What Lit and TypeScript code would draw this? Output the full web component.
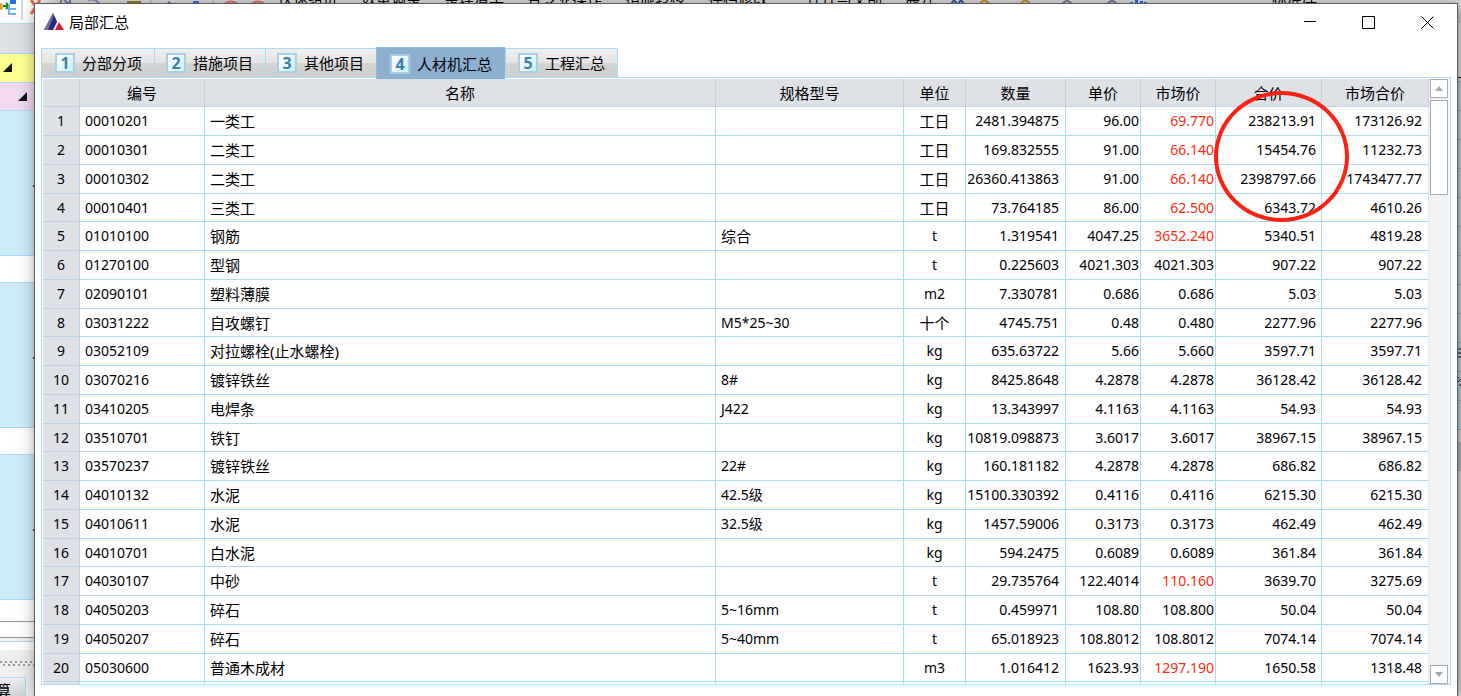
import { LitElement, html, css, svg } from "lit";
import { customElement, state } from "lit/decorators.js";
import { classMap } from "lit/directives/class-map.js";

type Row = [string, string, string, string, string, string, string, string, string];

const ROWS: Row[] = [
  ["00010201", "一类工", "", "工日", "2481.394875", "96.00", "69.770", "238213.91", "173126.92"],
  ["00010301", "二类工", "", "工日", "169.832555", "91.00", "66.140", "15454.76", "11232.73"],
  ["00010302", "二类工", "", "工日", "26360.413863", "91.00", "66.140", "2398797.66", "1743477.77"],
  ["00010401", "三类工", "", "工日", "73.764185", "86.00", "62.500", "6343.72", "4610.26"],
  ["01010100", "钢筋", "综合", "t", "1.319541", "4047.25", "3652.240", "5340.51", "4819.28"],
  ["01270100", "型钢", "", "t", "0.225603", "4021.303", "4021.303", "907.22", "907.22"],
  ["02090101", "塑料薄膜", "", "m2", "7.330781", "0.686", "0.686", "5.03", "5.03"],
  ["03031222", "自攻螺钉", "M5*25~30", "十个", "4745.751", "0.48", "0.480", "2277.96", "2277.96"],
  ["03052109", "对拉螺栓(止水螺栓)", "", "kg", "635.63722", "5.66", "5.660", "3597.71", "3597.71"],
  ["03070216", "镀锌铁丝", "8#", "kg", "8425.8648", "4.2878", "4.2878", "36128.42", "36128.42"],
  ["03410205", "电焊条", "J422", "kg", "13.343997", "4.1163", "4.1163", "54.93", "54.93"],
  ["03510701", "铁钉", "", "kg", "10819.098873", "3.6017", "3.6017", "38967.15", "38967.15"],
  ["03570237", "镀锌铁丝", "22#", "kg", "160.181182", "4.2878", "4.2878", "686.82", "686.82"],
  ["04010132", "水泥", "42.5级", "kg", "15100.330392", "0.4116", "0.4116", "6215.30", "6215.30"],
  ["04010611", "水泥", "32.5级", "kg", "1457.59006", "0.3173", "0.3173", "462.49", "462.49"],
  ["04010701", "白水泥", "", "kg", "594.2475", "0.6089", "0.6089", "361.84", "361.84"],
  ["04030107", "中砂", "", "t", "29.735764", "122.4014", "110.160", "3639.70", "3275.69"],
  ["04050203", "碎石", "5~16mm", "t", "0.459971", "108.80", "108.800", "50.04", "50.04"],
  ["04050207", "碎石", "5~40mm", "t", "65.018923", "108.8012", "108.8012", "7074.14", "7074.14"],
  ["05030600", "普通木成材", "", "m3", "1.016412", "1623.93", "1297.190", "1650.58", "1318.48"],
];

const HEADERS = ["", "编号", "名称", "规格型号", "单位", "数量", "单价", "市场价", "合价", "市场合价"];
const COLS = ["no", "code", "name", "spec", "unit", "qty", "price", "market", "sum", "msum"];
const TABS = ["分部分项", "措施项目", "其他项目", "人材机汇总", "工程汇总"];

/* The main program window that lies behind the summary dialog. */
@customElement("host-window")
export class HostWindow extends LitElement {
  static styles = css`
    :host {
      display: block;
      height: 100%;
      overflow: hidden;
      background: #f0f0f0;
      font: 15px/20px "Noto Sans", "Noto Sans CJK SC", sans-serif;
      color: #000;
    }
    .frame { display: flex; flex-direction: column; height: 100%; }
    .toolbar {
      flex: none;
      display: flex;
      height: 23px;
      box-sizing: border-box;
      background: linear-gradient(90deg, #fff, #fff 34px, #dcdcdc 60px);
      overflow: hidden;
    }
    .icons { flex: none; width: 278px; height: 23px; }
    .menu { display: flex; gap: 23px; margin-top: -12px; white-space: nowrap; }
    .wide { margin-left: 16px; }
    .far { margin-left: auto; margin-top: -12px; padding-right: 144px; }
    .tools { flex: none; width: 222px; height: 23px; }
    .body { flex: 1; min-height: 0; display: flex; justify-content: space-between; }
    .left { width: 60px; display: flex; flex-direction: column; }
    .left > div { flex: none; box-sizing: border-box; border-top: 1px solid #a9daf8; }
    .head { height: 30px; background: #dde0e5; }
    .yellow { height: 29px; background: #ffff90; padding: 9px 0 0 3px; }
    .pink { height: 28px; background: #f1d9f1; padding: 9px 0 0 18px; }
    .tri { display: block; width: 9px; height: 9px; }
    .blue { height: 145px; background: #cdecf8; display: flex; align-items: center; padding: 6px 0 0 33px; }
    .blue::after { content: ""; width: 4px; height: 2px; background: #222; }
    .gap { height: 27px; background: #fff; }
    .last { height: 22px; background: #fff; }
    .left > .field { height: 17px; background: #fff; border-top: 1px solid #8f8f8f; border-bottom: 1px solid #8f8f8f; }
    .line { height: 9px; background: #fff; margin-top: 3px; }
    .left > .split {
      height: 27px;
      border: 0;
      background: radial-gradient(circle at 1px 1px, #999 1px, transparent 1px) 0 11px / 5px 5px repeat-x,
        radial-gradient(circle at 1px 1px, #999 1px, transparent 1px) 3px 14px / 5px 5px repeat-x, #efefef;
    }
    .left > .bottom { flex: 1; background: linear-gradient(#eee, #ccc); width: 26px; border-right: 1px solid #a9daf8; }
    .calc { display: block; margin: 2px 0 0 -4px; }
    .right { width: 20px; display: flex; flex-direction: column; background: #efefef; }
    .props { height: 54px; flex: none; background: #f8f8f8; border-bottom: 1px solid #222; }
    .cells {
      height: 349px;
      flex: none;
      margin-top: 3px;
      background: repeating-linear-gradient(#9ccbe8 0 1px, #cdecf8 1px 29px);
    }
    .status { height: 29px; flex: none; margin-top: 12px; background: #c8cdd6; }
    .marks { display: block; width: 20px; height: 349px; }
  `;

  private corner() {
    return html`<svg class="tri" viewBox="0 0 9 9"><path d="M9 0V9H0Z" fill="#111" /></svg>`;
  }

  render() {
    return html`
      <div class="frame">
        <div class="toolbar">
          <svg class="icons" viewBox="0 0 278 23">
            <path d="M0 4h2v5H0z" fill="#ffe600" stroke="#c70" />
            <path d="M3 6h5M6 3l3 3-3 3" fill="none" stroke="#188a18" stroke-width="2" />
            <path d="M10 0h6v4h-6z" fill="#1f6fe0" />
            <path d="M9 4v10h7M10 9h6" fill="none" stroke="#6cb2f4" stroke-width="2" />
            <path d="M22 0V20" stroke="#b5b5b5" />
            <path d="M31 0l9 12M40 0l-9 14" stroke="#ee6848" stroke-width="3" />
            <path d="M61 0v4M64 0l5 4M70 0v4" stroke="#6b7f9f" stroke-width="2" />
            <path d="M88 0q8-2 12 5" fill="none" stroke="#8888bd" stroke-width="2" />
            <path d="M127 1h14v3h-14z" fill="#9c7a28" />
            <path d="M151 0V4M213 0V4" stroke="#aaa" />
            <path d="M166 4l3-3 3 3" fill="#317bd0" />
            <path d="M193 1h6v3h-6z" fill="#317bd0" />
            <path d="M224 4q7-5 14 0M251 4q7-5 14 0" fill="none" stroke="#db7766" stroke-width="2" />
          </svg>
          <div class="menu">
            <span>快速组价</span><span>数量调整</span><span>整理清单</span><span>各专业操作</span
            ><span>措施转移</span><span>存档修改</span><span class="wide">件性与交部</span><span>展开</span>
          </div>
          <svg class="tools" viewBox="0 0 222 23">
            <path d="M16 4l3-4 3 4M23 4l3-4 3 4" fill="none" stroke="#3854a0" stroke-width="2" />
            <path d="M45 4q4-7 9 0M86 4q4-7 9 0" fill="none" stroke="#c99229" stroke-width="2" />
            <path d="M127 4l5-4 5 4M172 4l5-4 5 4" fill="none" stroke="#71809c" stroke-width="2" />
            <path d="M195 2h3v2h-3zM200 0h3v4h-3zM205 1h3v3h-3zM209 2h3v2h-3z" fill="#1672df" />
          </svg>
          <span class="far">标准库</span>
        </div>
        <div class="body">
          <div class="left">
            <div class="head"></div>
            <div class="yellow">${this.corner()}</div>
            <div class="pink">${this.corner()}</div>
            <div class="blue"></div>
            <div class="gap"></div>
            <div class="blue"></div>
            <div class="gap"></div>
            <div class="blue"></div>
            <div class="last"></div>
            <div class="field"></div>
            <div class="line"></div>
            <div class="split"></div>
            <div class="bottom"><span class="calc">算</span></div>
          </div>
          <div class="right">
            <div class="props"></div>
            <div class="cells">
              <svg class="marks" viewBox="0 0 20 349">
                <path d="M17 268h3M17 272h3M17 276h3M17 301l3-3M17 297h1M18 304h2" stroke="#111" stroke-width="1" />
              </svg>
            </div>
            <div class="status"></div>
          </div>
        </div>
      </div>
    `;
  }
}

@customElement("app-root")
export class AppRoot extends LitElement {
  @state() private active = 3;

  static styles = css`
    :host {
      display: block;
      position: relative;
      height: 100vh;
      overflow: hidden;
      font-family: "Noto Sans", "Noto Sans CJK SC", sans-serif;
      font-size: 15px;
      line-height: 20px;
      color: #000;
    }
    button { font: inherit; color: inherit; padding: 0; border: 0; background: none; }
    .dialog {
      position: absolute;
      inset: 3px 3px 0 34px;
      box-sizing: border-box;
      display: flex;
      flex-direction: column;
      padding: 0 6px 11px;
      background: #fff;
      border: 1px solid #5c5c5c;
      border-bottom: 0;
      box-shadow: 3px 4px 16px rgba(0, 0, 0, 0.5);
    }
    .title { flex: none; height: 43px; display: flex; align-items: flex-start; }
    .logo { width: 20px; height: 18px; margin: 9px 5px 0 3px; }
    h1 { margin: 8px auto 0 0; font-size: 15px; line-height: 20px; font-weight: 400; }
    .ctl { width: 58px; height: 36px; display: grid; place-items: center; }
    .ctl:last-child { width: 47px; margin-left: 7px; }
    .ctl svg { width: 13px; height: 13px; display: block; }
    .tabs { flex: none; display: flex; align-items: flex-end; height: 30px; position: relative; }
    .tab {
      height: 29px;
      padding: 0 12px 0 11px;
      display: flex;
      align-items: center;
      gap: 7px;
      box-sizing: border-box;
      border-left: 1px solid #a9daf8;
      border-top: 1px solid #a9daf8;
      background: linear-gradient(#f0f0f0, #e4e4e4 48%, #d4d4d4 52%, #cdcdcd);
      white-space: nowrap;
    }
    .tab:first-child { padding-left: 13px; }
    .tab:last-child { border-right: 1px solid #a9daf8; padding-left: 12px; }
    .tab.on {
      height: 32px;
      margin-bottom: -2px;
      padding: 0 13px;
      background: #8eb0d0;
      border-color: #88bce0;
    }
    .num {
      width: 20px;
      height: 20px;
      box-sizing: border-box;
      border: 2px solid #abcfe2;
      background: linear-gradient(135deg, #fff, #e6f7fa 50%, #c8edf4);
      font: 700 16px/16px "Open Sans", sans-serif;
      color: #3b80aa;
      text-align: center;
    }
    .panel {
      position: relative;
      flex: 1;
      min-height: 0;
      display: flex;
      padding: 1px 1px 0;
      border: 1px solid #a9daf8;
    }
    .tabs { z-index: 1; }
    .view { flex: 1; min-width: 0; overflow: hidden; }
    table { width: 100%; table-layout: fixed; border-collapse: separate; border-spacing: 0; }
    th, td {
      box-sizing: border-box;
      height: 29px;
      padding: 0 5px;
      border-right: 1px solid #a9daf8;
      border-bottom: 1px solid #a9daf8;
      font-weight: 400;
      font-size: 14px;
      line-height: 20px;
      white-space: nowrap;
      overflow: hidden;
      text-align: left;
    }
    tbody tr:nth-child(4n) > * { height: 28px; }
    thead th { height: 28px; font-size: 15px; text-align: center; }
    th { background: #dee1e6; border-color: #bdd2e6; text-align: center; }
    tbody th { padding: 0; }
    td.name, td.han { font-size: 15px; }
    td.unit { text-align: center; }
    td.qty, td.price, td.market, td.sum, td.msum { text-align: right; }
    td.qty { padding: 0 6px 0 2px; }
    td.price, td.market { padding: 0 1px; }
    td.msum { padding-right: 6px; }
    td.msum { border-right-color: #d5ecfa; }
    td.diff { color: #ff2a0c; }
    .clip { display: flex; justify-content: flex-end; overflow: hidden; }
    col.no { width: 37px; }
    col.code { width: 125px; }
    col.spec { width: 188px; }
    col.unit { width: 62px; }
    col.qty { width: 100px; }
    col.price, col.market { width: 75px; }
    col.sum { width: 106px; }
    col.msum { width: 107px; }
    .bar {
      flex: none;
      width: 18px;
      padding: 0 1px;
      display: flex;
      flex-direction: column;
      background: #f2f2f2;
    }
    .step { flex: none; height: 19px; background: #fff; border: 1px solid #ababab; display: grid; place-items: center; }
    .step svg { width: 8px; height: 5px; display: block; }
    .thumb { height: 95px; box-sizing: border-box; margin: 2px 0 auto; background: #fff; border: 1px solid #ababab; }
    .ring {
      position: absolute;
      top: 13px;
      right: 101px;
      width: 135px;
      height: 131px;
      box-sizing: border-box;
      border: 4px solid #fb2213;
      border-radius: 50%;
      pointer-events: none;
    }
  `;

  private cell(value: string, i: number, row: Row) {
    const key = COLS[i + 1];
    const classes = {
      [key]: true,
      han: /^[\u4e00-\u9fff]+$/.test(value),
      diff: key === "market" && Number(row[5]) !== Number(value),
    };
    return html`<td class=${classMap(classes)}>${key === "qty" ? html`<div class="clip">${value}</div>` : value}</td>`;
  }

  private control(label: string, path: string) {
    return html`<button class="ctl" aria-label=${label}>
      <svg viewBox="0 0 13 13">${svg`<path d=${path} fill="none" stroke="#000" />`}</svg>
    </button>`;
  }

  render() {
    return html`
      <host-window></host-window>
      <section class="dialog" role="dialog" aria-labelledby="caption">
        <header class="title">
          <svg class="logo" viewBox="0 0 20 18">
            <path d="M9 0L0 17H17Z" fill="#29277f" />
            <path d="M9 0L0 17H4L10 2Z" fill="#6f70a8" />
            <path d="M14 7L9 17H20Z" fill="#fff" />
            <path d="M15 9L11 17H20Z" fill="#e5172f" />
          </svg>
          <h1 id="caption">局部汇总</h1>
          ${this.control("最小化", "M0 5.5H12")}
          ${this.control("最大化", "M.5 .5H12.5V12.5H.5Z")}
          ${this.control("关闭", "M.5 .5L12.5 12.5M12.5 .5L.5 12.5")}
        </header>
        <nav class="tabs" role="tablist">
          ${TABS.map(
            (t, i) => html`<button
              role="tab"
              aria-selected=${i === this.active}
              class=${classMap({ tab: true, on: i === this.active })}
              @click=${() => (this.active = i)}
            ><span class="num">${i + 1}</span><span>${t}</span></button>`
          )}
        </nav>
        <div class="panel">
          <div class="view">
            <table>
              <colgroup>${COLS.map((c) => html`<col class=${c} />`)}</colgroup>
              <thead><tr>${HEADERS.map((h) => html`<th scope="col">${h}</th>`)}</tr></thead>
              <tbody>
                ${ROWS.map(
                  (r, n) => html`<tr><th scope="row">${n + 1}</th>${r.map((v, i) => this.cell(v, i, r))}</tr>`
                )}
                <tr><th></th>${COLS.slice(1).map((c) => html`<td class=${c}></td>`)}</tr>
              </tbody>
            </table>
          </div>
          <div class="bar">
            <button class="step" aria-label="向上滚动"><svg viewBox="0 0 8 5"><path d="M0 5L4 0L8 5Z" fill="#aaa" /></svg></button>
            <div class="thumb"></div>
            <button class="step" aria-label="向下滚动"><svg viewBox="0 0 8 5"><path d="M0 0L4 5L8 0Z" fill="#aaa" /></svg></button>
          </div>
          <div class="ring"></div>
        </div>
      </section>
    `;
  }
}
